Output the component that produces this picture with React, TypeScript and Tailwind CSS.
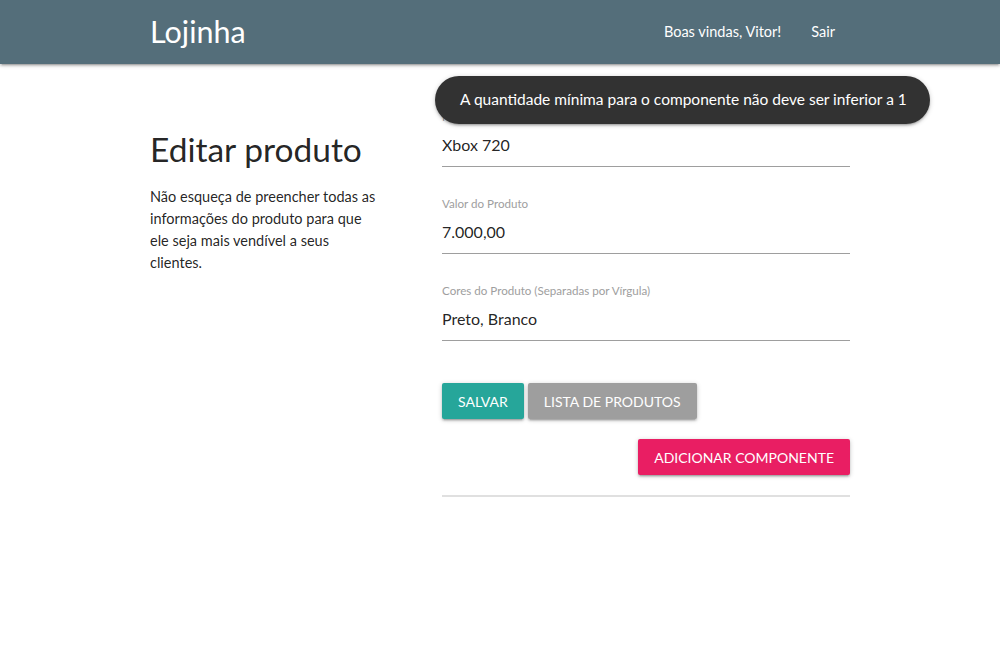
import React from 'react';

const font = { fontFamily: '"Lato", "Noto Sans", sans-serif' };

const btnShadow =
  'shadow-[0_2px_2px_0_rgba(0,0,0,0.14),0_3px_1px_-2px_rgba(0,0,0,0.12),0_1px_5px_0_rgba(0,0,0,0.2)]';

const Field: React.FC<{ label: string; value: string }> = ({ label, value }) => (
  <div className="flex flex-col">
    <label className="h-[14px] text-[11.6px] leading-[14px] text-[#9e9e9e]">{label}</label>
    <div className="flex h-[43px] items-center border-b border-[#9e9e9e] text-[16px] text-black/[0.87]">
      {value}
    </div>
  </div>
);

const App: React.FC = () => {
  return (
    <div className="relative min-h-[660px] bg-white text-[14.5px] text-black/[0.87]" style={font}>
      <nav className="h-16 bg-[#546e7a] shadow-[0_2px_2px_0_rgba(0,0,0,0.14),0_3px_1px_-2px_rgba(0,0,0,0.12),0_1px_5px_0_rgba(0,0,0,0.2)]">
        <div className="mx-auto flex h-full w-[700px] items-center justify-between">
          <a className="text-[30.5px] text-white">Lojinha</a>
          <ul className="flex items-center text-white">
            <li className="px-[15px]">Boas vindas, Vitor!</li>
            <li className="px-[15px]">Sair</li>
          </ul>
        </div>
      </nav>

      <main className="mx-auto flex w-[700px]">
        <div className="w-[233px] pt-[67px]">
          <h4 className="text-[33.5px] leading-[37px]">Editar produto</h4>
          <p className="mt-[18px] leading-[22px]">
            Não esqueça de preencher todas as informações do produto para que ele seja mais vendível a seus clientes.
          </p>
        </div>

        <div className="ml-[59px] flex w-[408px] flex-col pt-[46px]">
          <div className="flex flex-col gap-[30px]">
            <Field label="Nome do Produto" value="Xbox 720" />
            <Field label="Valor do Produto" value="7.000,00" />
            <Field label="Cores do Produto (Separadas por Vírgula)" value="Preto, Branco" />
          </div>

          <div className="mt-[42px] flex gap-[4px]">
            <button className={`h-9 rounded-[2px] bg-[#26a69a] px-4 text-[14px] uppercase text-white ${btnShadow}`}>
              Salvar
            </button>
            <button className={`h-9 rounded-[2px] bg-[#9e9e9e] px-4 text-[14px] uppercase text-white ${btnShadow}`}>
              Lista de Produtos
            </button>
          </div>

          <div className="mt-5 flex justify-end">
            <button className={`h-9 rounded-[2px] bg-[#e91e63] px-4 text-[14px] uppercase text-white ${btnShadow}`}>
              Adicionar Componente
            </button>
          </div>

          <hr className="mt-5 border-t-2 border-[#e0e0e0]" />
        </div>
      </main>

      {/* toast */}
      <div className={`absolute left-[435px] top-[76px] flex h-12 w-[495px] items-center whitespace-nowrap rounded-[24px] bg-[#323232] px-[25px] text-[15.5px] text-white ${btnShadow}`}>
        A quantidade mínima para o componente não deve ser inferior a 1
      </div>
    </div>
  );
};

export default App;
